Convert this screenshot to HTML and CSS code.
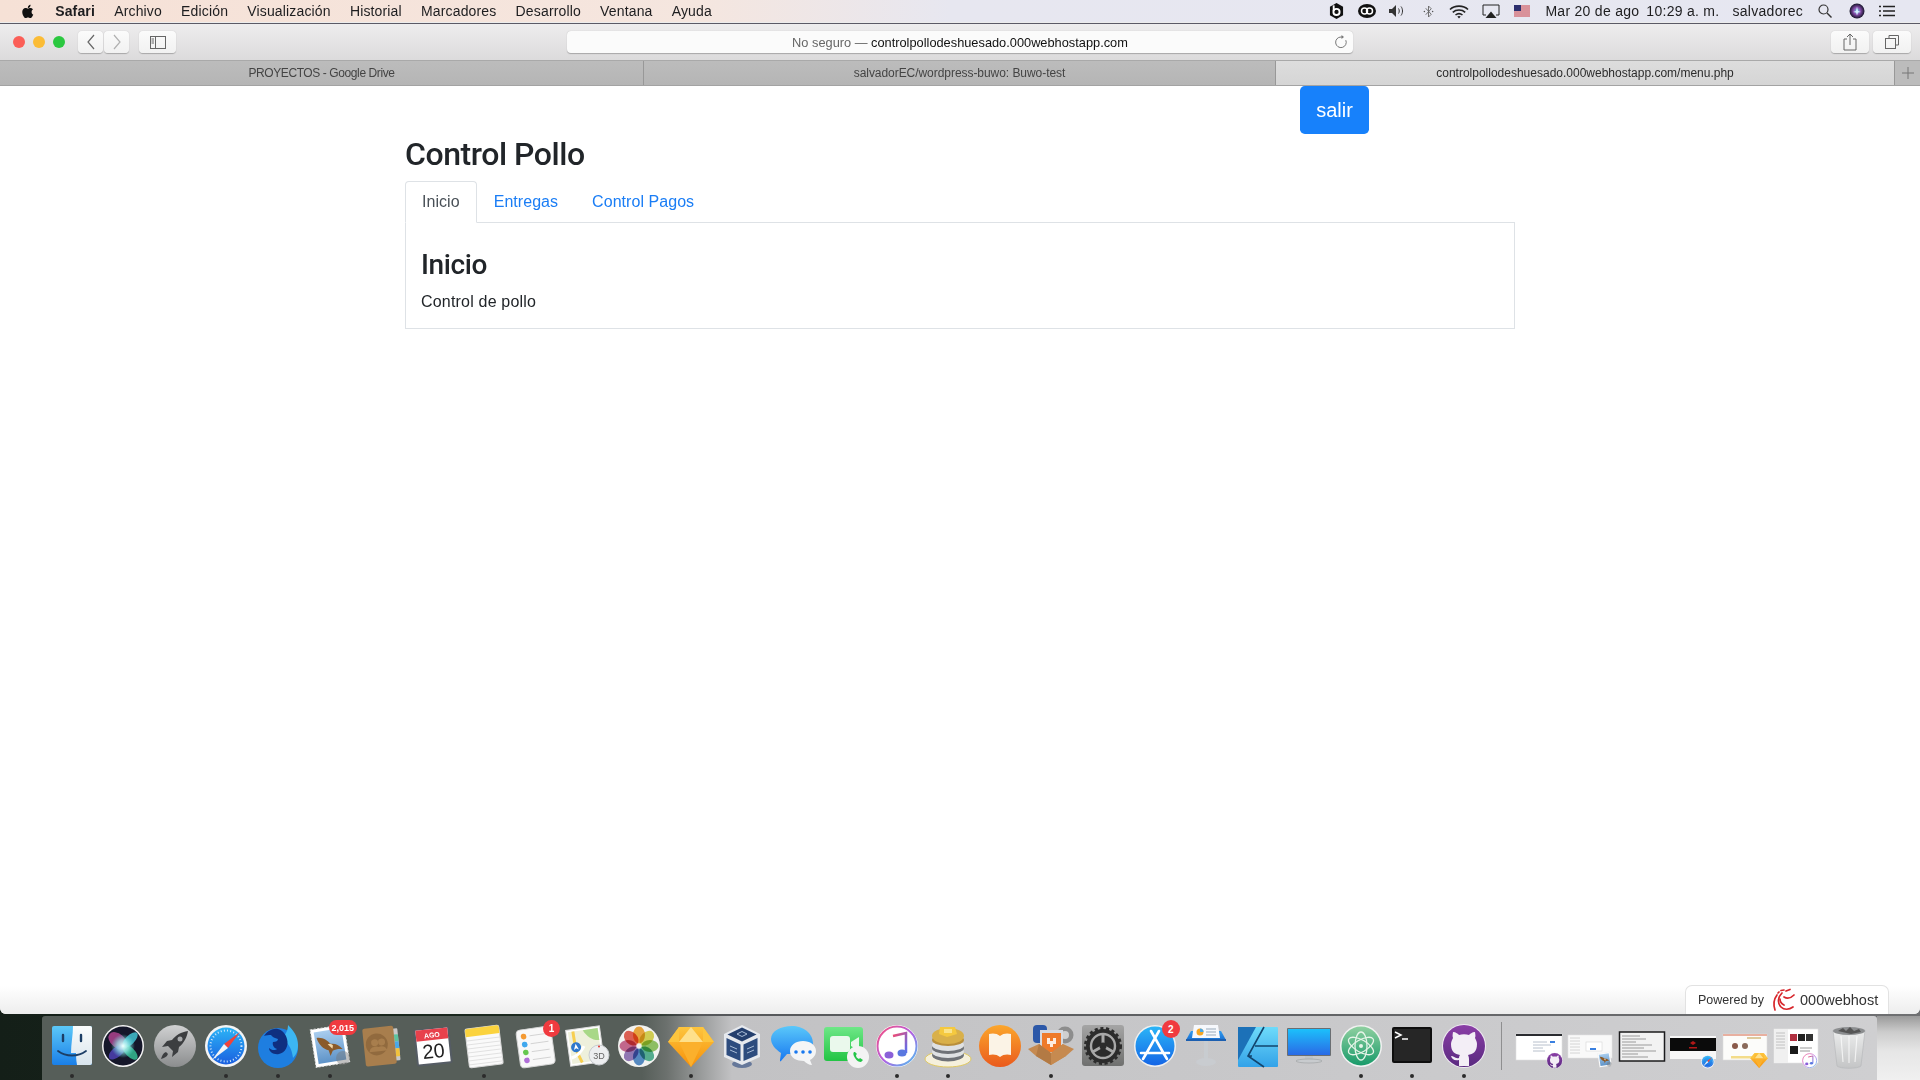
FILE: index.html
```html
<!DOCTYPE html>
<html lang="es">
<head>
<meta charset="utf-8">
<title>Control Pollo</title>
<link rel="stylesheet" href="styles.css">
</head>
<body>
<svg class="defs" aria-hidden="true">
  <defs>
    <linearGradient id="gFinder" x1="0" y1="0" x2="0" y2="1"><stop offset="0" stop-color="#5cc8f8"/><stop offset="1" stop-color="#1a7fe8"/></linearGradient>
    <linearGradient id="gFinderR" x1="0" y1="0" x2="0" y2="1"><stop offset="0" stop-color="#fafcfd"/><stop offset="1" stop-color="#d8e4ec"/></linearGradient>
    <linearGradient id="gGray" x1="0" y1="0" x2="0" y2="1"><stop offset="0" stop-color="#d0d1d2"/><stop offset="1" stop-color="#8b8d8e"/></linearGradient>
    <linearGradient id="gSafari" x1="0" y1="0" x2="0" y2="1"><stop offset="0" stop-color="#2cb4f6"/><stop offset="1" stop-color="#1a5fe0"/></linearGradient>
    <linearGradient id="gSky" x1="0" y1="0" x2="0" y2="1"><stop offset="0" stop-color="#a9cdee"/><stop offset="1" stop-color="#5e93c8"/></linearGradient>
    <linearGradient id="gSketch" x1="0" y1="0" x2="0" y2="1"><stop offset="0" stop-color="#fdc53e"/><stop offset="1" stop-color="#f79009"/></linearGradient>
    <linearGradient id="gMsg" x1="0" y1="0" x2="0" y2="1"><stop offset="0" stop-color="#5ac8fa"/><stop offset="1" stop-color="#1878f0"/></linearGradient>
    <linearGradient id="gFace" x1="0" y1="0" x2="0" y2="1"><stop offset="0" stop-color="#6ee787"/><stop offset="1" stop-color="#22c444"/></linearGradient>
    <linearGradient id="gTunes" x1="0" y1="0" x2="1" y2="1"><stop offset="0" stop-color="#f9507a"/><stop offset=".5" stop-color="#b35ee0"/><stop offset="1" stop-color="#4cc4f0"/></linearGradient>
    <linearGradient id="gNote" x1="0" y1="0" x2="1" y2="1"><stop offset="0" stop-color="#f7496e"/><stop offset="1" stop-color="#5a6ef0"/></linearGradient>
    <linearGradient id="gBooks" x1="0" y1="0" x2="0" y2="1"><stop offset="0" stop-color="#fba62c"/><stop offset="1" stop-color="#ea5a1c"/></linearGradient>
    <linearGradient id="gStore" x1="0" y1="0" x2="0" y2="1"><stop offset="0" stop-color="#2bb5f7"/><stop offset="1" stop-color="#1465e6"/></linearGradient>
    <linearGradient id="gGear" x1="0" y1="0" x2="0" y2="1"><stop offset="0" stop-color="#a5a5a5"/><stop offset="1" stop-color="#6f706f"/></linearGradient>
    <linearGradient id="gDisplay" x1="0" y1="0" x2="0" y2="1"><stop offset="0" stop-color="#1cc0fb"/><stop offset="1" stop-color="#2a6ae6"/></linearGradient>
    <linearGradient id="gAtom" x1="0" y1="0" x2="0" y2="1"><stop offset="0" stop-color="#8fd0a0"/><stop offset="1" stop-color="#189a6a"/></linearGradient>
    <linearGradient id="gGit" x1="0" y1="0" x2="0" y2="1"><stop offset="0" stop-color="#8a3ea6"/><stop offset="1" stop-color="#5a2a80"/></linearGradient>
    <linearGradient id="gAffinity" x1="0" y1="0" x2="0" y2="1"><stop offset="0" stop-color="#6edbfa"/><stop offset="1" stop-color="#33a2e8"/></linearGradient>
    <linearGradient id="gKeynote" x1="0" y1="0" x2="0" y2="1"><stop offset="0" stop-color="#2f9bf0"/><stop offset="1" stop-color="#1a70d0"/></linearGradient>
    <linearGradient id="gTrash" x1="0" y1="0" x2="0" y2="1"><stop offset="0" stop-color="#eceded"/><stop offset="1" stop-color="#c4c5c6"/></linearGradient>
    <radialGradient id="gSiri" cx=".5" cy=".5" r=".5"><stop offset="0" stop-color="#5de0e0"/><stop offset=".45" stop-color="#8a4fb0"/><stop offset="1" stop-color="#141428"/></radialGradient>
    <radialGradient id="gSiriCore" cx=".5" cy=".5" r=".5"><stop offset="0" stop-color="#f2ffff"/><stop offset=".5" stop-color="#9ff0ee" stop-opacity=".7"/><stop offset="1" stop-color="#5de0e0" stop-opacity="0"/></radialGradient>
  </defs>
</svg>

<header class="menubar">
  <nav class="menu-left">
    <svg class="apple" viewBox="0 0 14 16"><path d="M10.3 8.5c0-1.8 1.5-2.7 1.6-2.8-.9-1.300-2.200-1.500-2.700-1.500-1.100-.1-2.200.7-2.800.7-.6 0-1.500-.7-2.400-.7C2.700 4.200 1.500 4.900.9 6c-1.300 2.200-.3 5.500.9 7.300.6.900 1.300 1.900 2.300 1.800.9 0 1.300-.6 2.400-.6s1.400.6 2.400.6 1.600-.9 2.200-1.800c.7-1 1-2 1-2.100-.1 0-1.800-.7-1.800-2.700zM8.500 3.100c.5-.6.800-1.500.7-2.300-.7 0-1.600.5-2.100 1.100-.5.5-.9 1.400-.8 2.200.8.1 1.700-.4 2.200-1z"/></svg>
    <span class="menu-app">Safari</span>
    <span>Archivo</span><span>Edición</span><span>Visualización</span><span>Historial</span><span>Marcadores</span><span>Desarrollo</span><span>Ventana</span><span>Ayuda</span>
  </nav>
  <div class="menu-right">
    <svg class="st st-b" viewBox="0 0 16 18"><path d="M8 .5 15 4.500v9L8 17.500 1 13.500v-9z" fill="#111"/><circle cx="8" cy="10" r="3.300" fill="none" stroke="#fff" stroke-width="2"/><path d="M5 3v6" stroke="#fff" stroke-width="2"/></svg>
    <svg class="st st-cc" viewBox="0 0 20 16"><ellipse cx="10" cy="8" rx="9" ry="7" fill="#111"/><circle cx="7.500" cy="8" r="3" fill="none" stroke="#fff" stroke-width="1.500"/><circle cx="12.500" cy="8" r="3" fill="none" stroke="#fff" stroke-width="1.500"/></svg>
    <svg class="st st-vol" viewBox="0 0 18 14"><path d="M1 5h3l4-4v12l-4-4H1z" fill="#333"/><path d="M10.500 4.500c1 1.500 1 3.500 0 5M13 2.500c2 2.500 2 6.500 0 9" fill="none" stroke="#333" stroke-width="1"/></svg>
    <svg class="st st-bt" viewBox="0 0 12 16"><path d="M3 4.500 9 11 6 14V2l3 3-6 6.500" fill="none" stroke="#666" stroke-width="1"/><circle cx="1.500" cy="8" r=".8" fill="#555"/><circle cx="10.500" cy="8" r=".8" fill="#555"/></svg>
    <svg class="st st-wifi" viewBox="0 0 20 15"><path d="M1 5.500C5.500 1 14.500 1 19 5.500M3.800 8.300C7 5.300 13 5.300 16.200 8.300M6.500 11C8.500 9.400 11.500 9.400 13.500 11" fill="none" stroke="#222" stroke-width="1.600"/><path d="M8.300 12.500 10 14.500l1.700-2c-1-.8-2.400-.8-3.400 0z" fill="#222"/></svg>
    <svg class="st st-air" viewBox="0 0 18 15"><path d="M4 11H1V1h16v10h-3" fill="none" stroke="#222" stroke-width="1"/><path d="M9 7.500 14.500 14h-11z" fill="#222"/></svg>
    <svg class="st st-flag" viewBox="0 0 16 12"><rect width="16" height="12" fill="#fff"/><path d="M0 1h16M0 3h16M0 5h16M0 7h16M0 9h16M0 11h16" stroke="#b22234" stroke-width="1"/><rect width="7" height="6" fill="#2c2f6e"/></svg>
    <span class="clock-date">Mar 20 de ago</span>
    <span class="clock-time">10:29 a. m.</span>
    <span class="clock-user">salvadorec</span>
    <svg class="st st-search" viewBox="0 0 14 14"><circle cx="5.500" cy="5.500" r="4.500" fill="none" stroke="#333" stroke-width="1.200"/><path d="m9 9 4.500 4.500" stroke="#333" stroke-width="1.400"/></svg>
    <svg class="st st-siri" viewBox="0 0 16 16"><circle cx="8" cy="8" r="7.500" fill="url(#gSiri)"/><path d="M8 3.500 9 8l3 1-3 .500-1 3-1-3-3-.500 3-1z" fill="#d8f0ff"/></svg>
    <svg class="st st-list" viewBox="0 0 16 12"><path d="M4 1.500h12M4 6h12M4 10.500h12" stroke="#222" stroke-width="1.400"/><path d="M0 1.500h2M0 6h2M0 10.500h2" stroke="#222" stroke-width="1.400"/></svg>
  </div>
</header>

<div class="window">
  <div class="toolbar">
    <div class="lights">
      <span class="light light-red"></span><span class="light light-yellow"></span><span class="light light-green"></span>
    </div>
    <div class="btn-pair">
      <span class="tool-btn nav-btn"><svg viewBox="0 0 10 16" class="glyph-nav"><path d="M8 1 2 8l6 7" fill="none" stroke="#666" stroke-width="1.200"/></svg></span>
      <span class="tool-btn nav-btn"><svg viewBox="0 0 10 16" class="glyph-nav"><path d="m2 1 6 7-6 7" fill="none" stroke="#b0b0b0" stroke-width="1.200"/></svg></span>
    </div>
    <span class="tool-btn side-btn"><svg viewBox="0 0 16 13" class="glyph-side"><rect x=".5" y=".5" width="15" height="12" fill="none" stroke="#666"/><path d="M5.500 .5v12M1.500 3h2.500M1.500 5h2.500M1.500 7h2.500" stroke="#666" fill="none"/></svg></span>
    <div class="urlbar">
      <span class="url-text"><span class="url-muted">No seguro — </span>controlpollodeshuesado.000webhostapp.com</span>
      <svg viewBox="0 0 14 14" class="reload"><path d="M11.800 5.200A5.300 5.300 0 1 1 7 2h1.500" fill="none" stroke="#777" stroke-width="1"/><path d="M7.500 0v4L10 2z" fill="#777"/></svg>
    </div>
    <div class="toolbar-right">
      <span class="tool-btn share-btn"><svg viewBox="0 0 14 18" class="glyph-share"><path d="M4 6H1v11h12V6h-3M7 12V1M4 4l3-3 3 3" fill="none" stroke="#666"/></svg></span>
      <span class="tool-btn tabs-btn"><svg viewBox="0 0 14 14" class="glyph-tabs"><path d="M4 3V.5h9.500V10H11" fill="none" stroke="#666"/><rect x=".5" y="3.500" width="10" height="10" fill="none" stroke="#666"/></svg></span>
    </div>
  </div>
  <div class="tabstrip">
    <div class="tab tab-one">PROYECTOS - Google Drive</div>
    <div class="tab tab-two">salvadorEC/wordpress-buwo: Buwo-test</div>
    <div class="tab tab-active">controlpollodeshuesado.000webhostapp.com/menu.php</div>
    <div class="tab-plus"><svg viewBox="0 0 12 12" class="glyph-plus"><path d="M6 0v12M0 6h12" stroke="#777" stroke-width="1"/></svg></div>
  </div>

  <main class="page">
    <div class="container">
      <div class="exit-row"><a class="btn-exit" href="#">salir</a></div>
      <h2 class="title">Control Pollo</h2>
      <ul class="nav-tabs">
        <li class="nav-item nav-active">Inicio</li>
        <li class="nav-item">Entregas</li>
        <li class="nav-item">Control Pagos</li>
      </ul>
      <section class="tab-content">
        <h3 class="pane-title">Inicio</h3>
        <p class="pane-text">Control de pollo</p>
      </section>
    </div>
    <div class="win-shadow"></div>
    <div class="powered">
      <span class="powered-by">Powered by</span>
      <svg viewBox="0 0 24 24" class="logo000"><g fill="none" stroke="#d7262b" stroke-width="1.700" stroke-linecap="round"><path d="M6 7C3 11 2 16 4 22"/><path d="M11 5C7 9 6 15 10 19c3 3 8 3 12 0"/><path d="M23 7c-3 3-7 4-10 2"/><path d="M10 2.500 13 2M15 3l4-1.500M7 5l1-1"/><path d="M9 11c0 3 2 5 4 6"/></g></svg>
      <span class="powered-name">000webhost</span>
    </div>
  </main>
</div>

<footer class="dock-zone">
  <div class="dock">
    <div class="dock-item running"><svg class="icon" viewBox="0 0 48 48"><rect x="4" y="4" width="40" height="39" rx="2" fill="url(#gFinder)"/><path d="M25 4h17a2 2 0 0 1 2 2v35a2 2 0 0 1-2 2H29c-1-6-1-10-1-12h-5c0-9 2-18 2-27z" fill="url(#gFinderR)"/><path d="M15 13v6M33 13v6" stroke="#1c3e66" stroke-width="2.400" stroke-linecap="round"/><path d="M10 29c8 6 20 6 28 0" fill="none" stroke="#1c3e66" stroke-width="1.800" stroke-linecap="round"/></svg></div>

    <div class="dock-item"><svg class="icon" viewBox="0 0 48 48"><circle cx="24" cy="24" r="21" fill="#f4f4f4"/><circle cx="24" cy="24" r="19.500" fill="#15172a"/><ellipse cx="19" cy="19" rx="11" ry="7" fill="#c24a9c" opacity=".75" transform="rotate(40 19 19)"/><ellipse cx="18" cy="30" rx="10" ry="5" fill="#5a4ad0" opacity=".7" transform="rotate(-40 18 30)"/><ellipse cx="31" cy="18" rx="10" ry="4.500" fill="#48d8e8" opacity=".75" transform="rotate(-45 31 18)"/><ellipse cx="31" cy="30" rx="10" ry="4.500" fill="#3ce0a8" opacity=".7" transform="rotate(45 31 30)"/><circle cx="24" cy="24" r="12" fill="url(#gSiriCore)"/></svg></div>

    <div class="dock-item"><svg class="icon" viewBox="0 0 48 48"><circle cx="24" cy="24" r="21" fill="url(#gGray)"/><path d="M37 9c-7 1-12 4-16 9l-5 1-5 6 6-1 5 5-1 6 6-5 1-5c5-4 8-10 9-16z" fill="#3c3e40"/><circle cx="29" cy="17" r="2.500" fill="#a8aaac"/><path d="M15 30c-3 1-4 4-5 7 3-1 6-2 7-5z" fill="#3c3e40"/></svg></div>

    <div class="dock-item running"><svg class="icon" viewBox="0 0 48 48"><g id="safari-g"><circle cx="24" cy="24" r="21" fill="#f4f4f4"/><circle cx="24" cy="24" r="18.500" fill="url(#gSafari)"/><circle cx="24" cy="24" r="15.500" fill="none" stroke="#cfe6fb" stroke-width="2" stroke-dasharray="1 2.200"/><path d="m38 10-12 16-4-4z" fill="#f0433a"/><path d="m10 38 12-16 4 4z" fill="#f4f4f4"/></g></svg></div>

    <div class="dock-item running"><svg class="icon" viewBox="0 0 48 48"><circle cx="24" cy="26" r="20" fill="#1e7ee0"/><path d="M34 3c5 5 10 11 10 20 0 6-2 10-5 13-1-10-6-17-12-20 5-3 7-8 7-13z" fill="#3cb6f2"/><path d="M10 14c3-5 9-8 14-7 4 1 8 5 9 10 2 7-2 14-8 15-5 1-10-2-10-6 2 2 6 3 8 1-3-1-5-4-4-7 3 0 5-1 5-3-3-1-6-2-7-4-2 0-5 0-7 1z" fill="#0f2f80"/></svg></div>

    <div class="dock-item running"><svg class="icon" viewBox="0 0 48 48"><g id="mail-g"><g transform="rotate(-9 24 24)"><rect x="7" y="5" width="34" height="38" fill="#fff" stroke="#ddd" stroke-dasharray="2 1.500"/><rect x="10" y="8" width="28" height="32" fill="url(#gSky)"/><path d="M12 14c6 0 10 4 13 8 4 0 8 2 11 7-4-1-7-1-10 0l-3 5-1-6c-5-2-9-7-10-14z" fill="#8a5a2a"/><path d="M22 22c2-1 4 0 5 2l-1 3z" fill="#f2d7a8"/></g><circle cx="37" cy="36" r="7" fill="#777" opacity=".45"/></g></svg><span class="badge badge-wide">2,015</span></div>

    <div class="dock-item"><svg class="icon" viewBox="0 0 48 48"><g transform="rotate(-6 24 24)"><rect x="36" y="8" width="6" height="32" rx="1" fill="#c9c9c9"/><rect x="38" y="14" width="4" height="7" fill="#5cc4a0"/><rect x="38" y="21" width="4" height="7" fill="#4aa8e8"/><rect x="38" y="28" width="4" height="8" fill="#f2c23c"/><rect x="7" y="5" width="31" height="38" rx="2" fill="#a87e4d"/><circle cx="20" cy="22" r="11" fill="#916a3e"/><circle cx="18" cy="20" r="3.500" fill="#a87e4d"/><circle cx="25" cy="20" r="3.500" fill="#a87e4d"/><path d="M12 29c1-4 3-5 6-5s5 1 6 5zM22 29c0-2 0-3-1-4 4-2 8 0 9 4z" fill="#a87e4d"/></g></svg></div>

    <div class="dock-item"><svg class="icon" viewBox="0 0 48 48"><g transform="rotate(-6 24 24)"><rect x="6" y="6" width="36" height="37" rx="2" fill="#555c64"/><rect x="8" y="7" width="32" height="34" fill="#fff"/><rect x="8" y="7" width="32" height="11" fill="#e8414c"/><text x="24" y="15.500" class="cal-mon">AGO</text><text x="24" y="36" class="cal-day">20</text></g></svg></div>

    <div class="dock-item running"><svg class="icon" viewBox="0 0 48 48"><g transform="rotate(-7 24 24)"><rect x="7" y="5" width="34" height="39" rx="2" fill="#fafafa" stroke="#d8d8d8"/><path d="M7 7a2 2 0 0 1 2-2h30a2 2 0 0 1 2 2v6H7z" fill="#fbd33e"/><path d="M7 17h34M7 21h34M7 25h34M7 29h34M7 33h34M7 37h34M7 41h34" stroke="#ddd" stroke-width=".8"/></g></svg></div>

    <div class="dock-item"><svg class="icon" viewBox="0 0 48 48"><g transform="rotate(-8 24 24)"><rect x="6" y="6" width="35" height="38" rx="4" fill="#f8f8f8" stroke="#d4d4d4"/><circle cx="13" cy="13" r="2.800" fill="#f49a32"/><circle cx="13" cy="21" r="2.800" fill="#3fa8ee"/><circle cx="13" cy="29" r="2.800" fill="#66c850"/><circle cx="13" cy="37" r="2.800" fill="#b06ed8"/><path d="M19 13h18M19 21h18M19 29h18M19 37h18" stroke="#ccc" stroke-width=".8"/></g></svg><span class="badge badge-one">1</span></div>

    <div class="dock-item"><svg class="icon" viewBox="0 0 48 48"><g transform="rotate(-8 22 24)"><rect x="5" y="6" width="34" height="36" fill="#fff" stroke="#ddd"/><rect x="7" y="8" width="30" height="32" fill="#eef0dc"/><path d="M22 8h15v12c-6 0-12-5-15-12z" fill="#a8d888"/><path d="M12 8c0 10 0 20 5 32" fill="none" stroke="#f7cf50" stroke-width="3"/><path d="M7 34c6-1 10-4 14-10" fill="none" stroke="#fff" stroke-width="3"/><circle cx="13" cy="24" r="5" fill="#2d77cc"/><path d="m13 20.500 2.500 6-2.500-1.500-2.500 1.500z" fill="#fff"/></g><circle cx="36" cy="33" r="10" fill="#eceef0" stroke="#c8ccd0"/><text x="36" y="36.500" class="map-3d">3D</text><circle cx="36" cy="24.500" r="1" fill="#e0352c"/></svg></div>

    <div class="dock-item"><svg class="icon" viewBox="0 0 48 48"><circle cx="24" cy="24" r="21" fill="#f2f2f0"/><g class="petals"><ellipse cx="24" cy="13" rx="6" ry="8.500" fill="#f2a531"/><ellipse cx="24" cy="13" rx="6" ry="8.500" fill="#d8d449" transform="rotate(45 24 24)"/><ellipse cx="24" cy="13" rx="6" ry="8.500" fill="#8cc45c" transform="rotate(90 24 24)"/><ellipse cx="24" cy="13" rx="6" ry="8.500" fill="#4aae8e" transform="rotate(135 24 24)"/><ellipse cx="24" cy="13" rx="6" ry="8.500" fill="#4b86c8" transform="rotate(180 24 24)"/><ellipse cx="24" cy="13" rx="6" ry="8.500" fill="#8f72b8" transform="rotate(225 24 24)"/><ellipse cx="24" cy="13" rx="6" ry="8.500" fill="#c85f8c" transform="rotate(270 24 24)"/><ellipse cx="24" cy="13" rx="6" ry="8.500" fill="#e55748" transform="rotate(315 24 24)"/></g></svg></div>

    <div class="dock-item running"><svg class="icon" viewBox="0 0 48 48"><g id="sketch-g"><path d="M12 5h24l11 15-23 25L1 20z" fill="url(#gSketch)"/><path d="M24 5 12 20h24z" fill="#fee08b"/><path d="M12 20 24 45 36 20z" fill="#fbb02c"/><path d="M12 5 1 20h11zM36 5l11 15H36z" fill="#fdc53e"/></g></svg></div>

    <div class="dock-item"><svg class="icon" viewBox="0 0 48 48"><ellipse cx="24" cy="42" rx="10" ry="4" fill="#66789a"/><path d="M24 3 42 12v23l-18 8-18-8V12z" fill="#e6e9ee"/><path d="M24 5.500 38.500 12.500 24 19.500 9.500 12.500z" fill="#243f6e"/><path d="M8.500 16l14 6.500v16.500l-14-6zM39.500 16l-14 6.500v16.500l14-6z" fill="#2d4c7e"/><path d="M12 24l7 3M12 28l7 3M29 27l7-3M29 31l7-3M19 12l5-2.500 5 2.500-5 2.500z" stroke="#a9bcd6" stroke-width="1" fill="none"/></svg></div>

    <div class="dock-item"><svg class="icon" viewBox="0 0 48 48"><path d="M22 4c11 0 21 7 21 17 0 5-3 9-6 11H17l-6 7c-1 1-1 0-1-1l1-7C5 27 1 22 1 17 1 9 11 4 22 4z" fill="url(#gMsg)"/><path d="M33 19c7 0 13 4 13 10 0 5-4 8-6 9l2 5c-3 0-6-2-8-4-7 0-14-3-14-10 0-6 6-10 13-10z" fill="#f4f5f6"/><circle cx="26" cy="30" r="1.800" fill="#1878f0"/><circle cx="33" cy="30" r="1.800" fill="#1878f0"/><circle cx="40" cy="30" r="1.800" fill="#1878f0"/></svg></div>

    <div class="dock-item"><svg class="icon" viewBox="0 0 48 48"><rect x="3" y="5" width="39" height="34" rx="3" fill="url(#gFace)"/><rect x="9" y="14" width="20" height="16" rx="3" fill="#eaf8ec"/><path d="m30 20 8-5v14l-8-5z" fill="#eaf8ec"/><circle cx="37" cy="35" r="11" fill="#f3f3f3"/><path d="M33 30c-1 1-1 3 1 6s4 4 6 4l2-2-3-2-1 1c-2-1-3-2-3-4l1-1-2-2z" fill="#24c548"/></svg></div>

    <div class="dock-item running"><svg class="icon" viewBox="0 0 48 48"><g id="tunes-g"><circle cx="24" cy="24" r="21" fill="#fff"/><circle cx="24" cy="24" r="19.500" fill="none" stroke="url(#gTunes)" stroke-width="2"/><path d="M20 14 33 11v20" fill="none" stroke="url(#gNote)" stroke-width="2.500"/><path d="M20 14v19" stroke="url(#gNote)" stroke-width="2.500"/><ellipse cx="16" cy="33" rx="4.500" ry="3.500" fill="#8a60d8"/><ellipse cx="29" cy="31" rx="4.500" ry="3.500" fill="#5a78e0"/></g></svg></div>

    <div class="dock-item running"><svg class="icon" viewBox="0 0 48 48"><ellipse cx="24" cy="37" rx="23" ry="8" fill="#f5f0dc" stroke="#e0c860"/><ellipse cx="24" cy="33" rx="16" ry="6.500" fill="#6f7277"/><ellipse cx="24" cy="30" rx="16" ry="6" fill="#dfe1e3"/><ellipse cx="24" cy="26" rx="16" ry="6" fill="#6f7277"/><ellipse cx="24" cy="23" rx="16" ry="6" fill="#dfe1e3"/><ellipse cx="24" cy="18" rx="16" ry="6" fill="#b98f3c"/><ellipse cx="24" cy="14" rx="16" ry="8" fill="#d9b04a"/><path d="M16 5h15l2 7-10 3-8-3z" fill="#f5c93f"/><rect x="20" y="7" width="8" height="4" fill="#fbe38a"/></svg></div>

    <div class="dock-item"><svg class="icon" viewBox="0 0 48 48"><circle cx="24" cy="24" r="21" fill="url(#gBooks)"/><path d="M24 14c-3-3-8-3-11-2v21c3-1 8-1 11 2zM24 14c3-3 8-3 11-2v21c-3-1-8-1-11 2z" fill="#fbf3e6"/></svg></div>

    <div class="dock-item running"><svg class="icon" viewBox="0 0 48 48"><circle cx="38" cy="13" r="8.500" fill="#8d8d8d"/><circle cx="38" cy="13" r="4" fill="#cfcfcf"/><rect x="6" y="3" width="14" height="18" rx="4" fill="#2c58a8"/><rect x="13" y="8" width="23" height="24" fill="#d5d9e0"/><rect x="15" y="11" width="19" height="19" fill="#ee7a2a"/><path d="M20 16h3v3h3v-3h3v6h-3v3h-3v-3h-3z" fill="#fff" opacity=".85"/><path d="M1 27 12 22l12 9 12-9 11 5-8 7v0l-15 9-15-9z" fill="#c68a50"/><path d="M24 31v12l-15-9 3-12z" fill="#b37a44"/><path d="M24 31v12l15-9-3-12z" fill="#c68a50"/></svg></div>

    <div class="dock-item"><svg class="icon" viewBox="0 0 48 48"><rect x="3" y="3" width="42" height="41" rx="3" fill="url(#gGear)"/><circle cx="24" cy="24" r="17" fill="#2c2c2c"/><circle cx="24" cy="24" r="17" fill="none" stroke="#2c2c2c" stroke-width="4" stroke-dasharray="3 2.500"/><circle cx="24" cy="24" r="12" fill="none" stroke="#a8a8a8" stroke-width="2.400"/><path d="M24 24V12M24 24 13.600 30M24 24l10.400 6" stroke="#a8a8a8" stroke-width="3"/><circle cx="24" cy="24" r="3.500" fill="#2c2c2c"/></svg></div>

    <div class="dock-item"><svg class="icon" viewBox="0 0 48 48"><circle cx="24" cy="24" r="21" fill="#f0f0f0"/><circle cx="24" cy="24" r="19.500" fill="url(#gStore)"/><path d="M28 9 15 32M20 9l13 23M10 31h28M12 37l3-5M36 37l-3-5" stroke="#fff" stroke-width="2.600" stroke-linecap="round"/></svg><span class="badge badge-two">2</span></div>

    <div class="dock-item"><svg class="icon" viewBox="0 0 48 48"><path d="M9 9h30l5 9H4z" fill="url(#gKeynote)"/><rect x="4" y="17" width="40" height="2" fill="#1c5fb0"/><path d="M12 3h24l2 13H10z" fill="#f6f8fc"/><circle cx="18" cy="10" r="3.500" fill="#f5a623"/><path d="M18 10V6.500A3.500 3.500 0 0 1 21.500 10z" fill="#4aa8e8"/><path d="M24 7h10M24 10h10M24 13h10" stroke="#9ab" stroke-width="1"/><rect x="22" y="19" width="4" height="19" fill="#c8ccd0"/><ellipse cx="24" cy="40" rx="10" ry="4" fill="#c9ccd0"/></svg></div>

    <div class="dock-item"><svg class="icon" viewBox="0 0 48 48"><rect x="4" y="5" width="40" height="40" rx="1" fill="url(#gAffinity)"/><path d="M4 5h18L4 38z" fill="#1c71b8"/><path d="M30 5 14 34l16 11M21 24h23M14 34l4 0" fill="none" stroke="#12456e" stroke-width="1.600"/></svg></div>

    <div class="dock-item"><svg class="icon" viewBox="0 0 48 48"><rect x="2" y="6" width="44" height="28" rx="1" fill="#6a6e72"/><rect x="3" y="7" width="42" height="26" fill="url(#gDisplay)"/><rect x="20" y="34" width="8" height="4" fill="#c0c3c6"/><ellipse cx="24" cy="39" rx="13" ry="2" fill="#c8cbce" stroke="#9a9da0" stroke-width=".6"/></svg></div>

    <div class="dock-item running"><svg class="icon" viewBox="0 0 48 48"><circle cx="24" cy="24" r="21" fill="#f2f2f2"/><circle cx="24" cy="24" r="19.500" fill="url(#gAtom)"/><g fill="none" stroke="#e6f4e8" stroke-width="1.300"><ellipse cx="24" cy="24" rx="14" ry="6" transform="rotate(30 24 24)"/><ellipse cx="24" cy="24" rx="14" ry="6" transform="rotate(90 24 24)"/><ellipse cx="24" cy="24" rx="14" ry="6" transform="rotate(150 24 24)"/></g><circle cx="24" cy="24" r="2" fill="#e6f4e8"/></svg></div>

    <div class="dock-item running"><svg class="icon" viewBox="0 0 48 48"><rect x="4" y="5" width="40" height="36" rx="2" fill="#0e0e0e"/><rect x="6" y="7" width="36" height="32" fill="#262626"/><path d="m7 10 6 3-6 3" fill="none" stroke="#fff" stroke-width="1.500"/><path d="M14 17h6" stroke="#fff" stroke-width="1.500"/></svg></div>

    <div class="dock-item running"><svg class="icon" viewBox="0 0 48 48"><g id="git-g"><circle cx="24" cy="24" r="22" fill="#efe9f2"/><circle cx="24" cy="24" r="21" fill="url(#gGit)"/><path d="M19 44v-6c-5 1-7-1-8-4 3 0 4 3 8 2 0-2 1-3 1-3-5-1-9-3-9-11 0-2 1-4 2-6-1-2 0-5 0-6 3 0 5 2 6 3 3-1 7-1 10 0 1-1 3-3 6-3 0 1 1 4 0 6 1 2 2 4 2 6 0 8-4 10-9 11 0 0 1 2 1 4v7z" fill="#f3eef6"/></g></svg></div>

    <span class="dock-sep"></span>

    <div class="dock-item thumb"><svg class="icon" viewBox="0 0 48 48"><rect x="1" y="12" width="46" height="26" fill="#fff" stroke="#e0e0e0" stroke-width=".6"/><rect x="1" y="12" width="46" height="2" fill="#2a2c30"/><path d="M18 20h14M18 23h18M18 26h10M18 29h12" stroke="#b8c0cc" stroke-width="1"/><rect x="35" y="19" width="5" height="2" fill="#3a80e0"/><use href="#git-g" transform="translate(31 30) scale(.36)"/></svg></div>
    <div class="dock-item thumb"><svg class="icon" viewBox="0 0 48 48"><rect x="2" y="13" width="44" height="23" fill="#f9f9f9" stroke="#e4e4e4" stroke-width=".6"/><path d="M4 16h10M4 19h10M4 22h10M4 25h10M4 28h10M4 31h10" stroke="#ccc" stroke-width=".8"/><rect x="20" y="20" width="16" height="9" fill="#fff" stroke="#d0d0d0" stroke-width=".5"/><rect x="24" y="26" width="6" height="2" fill="#3a80e0"/><use href="#mail-g" transform="translate(30 29) scale(.36)"/></svg></div>
    <div class="dock-item thumb"><svg class="icon" viewBox="0 0 48 48"><rect x="1.500" y="10" width="45" height="29" fill="#f2f2f2" stroke="#1b1b1d" stroke-width="1.500"/><path d="M4 14h18M4 17h24M4 20h14M4 23h30M4 26h22M4 29h34M4 32h16M4 35h26" stroke="#9a9a9a" stroke-width="1"/></svg></div>
    <div class="dock-item thumb"><svg class="icon" viewBox="0 0 48 48"><rect x="1" y="14" width="46" height="23" fill="#f7f7f7"/><rect x="1" y="16" width="46" height="13" fill="#0b0b0b"/><path d="m24 19 3 2-3 2-3-2z" fill="#b01818"/><rect x="20" y="25" width="8" height="1.500" fill="#b01818"/><use href="#safari-g" transform="translate(31 32) scale(.32)"/></svg></div>
    <div class="dock-item thumb"><svg class="icon" viewBox="0 0 48 48"><rect x="2" y="12" width="44" height="26" fill="#fcfcfa" stroke="#ddd" stroke-width=".6"/><rect x="2" y="12" width="44" height="2" fill="#e8b0a0"/><path d="M26 16h14" stroke="#caa860" stroke-width="1.200"/><circle cx="14" cy="24" r="3" fill="#8a5a4a"/><circle cx="24" cy="24" r="3" fill="#8a6a5a"/><rect x="10" y="34" width="26" height="2.500" fill="#f3dc8a"/><use href="#sketch-g" transform="translate(29 29) scale(.38)"/></svg></div>
    <div class="dock-item thumb"><svg class="icon" viewBox="0 0 48 48"><rect x="2" y="7" width="44" height="34" fill="#fff" stroke="#e4e4e4" stroke-width=".6"/><rect x="2" y="7" width="14" height="34" fill="#f0f0f0"/><path d="M4 11h9M4 14h9M4 17h9M4 20h9M4 23h9M4 26h9" stroke="#bbb" stroke-width=".9"/><rect x="18" y="12" width="7" height="7" fill="#b03040"/><rect x="26" y="12" width="7" height="7" fill="#222"/><rect x="34" y="12" width="7" height="7" fill="#333"/><rect x="18" y="24" width="8" height="8" fill="#1a1a1a"/><path d="M28 26h12M28 29h10" stroke="#999" stroke-width="1"/><use href="#tunes-g" transform="translate(29 30) scale(.36)"/></svg></div>
    <div class="dock-item"><svg class="icon" viewBox="0 0 48 48"><path d="M9 8h32l-4 36c-3 3-21 3-24 0z" fill="url(#gTrash)" stroke="#b4b6b8" stroke-width=".6"/><ellipse cx="25" cy="9" rx="16" ry="4" fill="#8c8e90"/><path d="M14 9l5-3 3 3 4-4 4 4 5-2 2 3-10 2z" fill="#555"/><path d="M17 14l2 26M25 14v27M33 14l-2 26" stroke="#fff" stroke-width="1.200" opacity=".7"/></svg></div>
  </div>
</footer>
</body>
</html>
```

FILE: styles.css
```css
* { box-sizing: border-box; }

html, body { height: 100%; }

body {
  margin: 0;
  height: 1080px;
  overflow: hidden;
  display: flex;
  flex-direction: column;
  font-family: "Liberation Sans", Arial, sans-serif;
  color: #212529;
  background: linear-gradient(90deg, #141f18 0, #1d2b20 640px, #55575a 700px, #6f7072 100%);
}

.defs { width: 0; height: 0; position: absolute; }

/* menu bar */
.menubar {
  height: 24px;
  flex: none;
  display: flex;
  justify-content: space-between;
  align-items: center;
  padding: 0 25px 2px 22px;
  font-size: 14px;
  letter-spacing: .15px;
  color: #1d1d1f;
  background: linear-gradient(90deg, #f6e1d6 0, #f5e6df 700px, #e7e7f0 950px, #e6e7f1 100%);
  box-shadow: inset 0 -1px 0 #5b5a66, inset 0 -2px 0 #ececec;
}
.menu-left { display: flex; align-items: center; gap: 19.200px; }
.apple { width: 13px; height: 15px; margin-right: 1px; fill: #111; }
.menu-app { font-weight: 700; }
.menu-right { display: flex; align-items: center; letter-spacing: .28px; }
.st { display: block; flex: none; }
.st-b { width: 15px; height: 18px; }
.st-cc { width: 20px; height: 16px; margin-left: 13px; }
.st-vol { width: 18px; height: 14px; margin-left: 11px; }
.st-bt { width: 11px; height: 15px; margin-left: 17px; }
.st-wifi { width: 20px; height: 15px; margin-left: 15px; }
.st-air { width: 18px; height: 15px; margin-left: 13px; }
.st-flag { width: 16px; height: 12px; margin-left: 14px; }
.clock-date { margin-left: 15px; }
.clock-time { margin-left: 7px; }
.clock-user { margin-left: 13px; }
.st-search { width: 14px; height: 14px; margin-left: 15px; }
.st-siri { width: 16px; height: 16px; margin-left: 17px; }
.st-list { width: 16px; height: 12px; margin-left: 14px; }

/* browser window */
.window {
  flex: 1;
  min-height: 0;
  display: flex;
  flex-direction: column;
  margin-bottom: 2px;
  border-radius: 0 0 6px 6px;
  overflow: hidden;
}
.toolbar {
  height: 37px;
  flex: none;
  display: flex;
  align-items: center;
  padding: 0 9px 0 13px;
  background: linear-gradient(180deg, #eeedee, #dcdbdc);
  border-bottom: 1px solid #a9a9a9;
}
.lights { display: flex; gap: 8px; margin-right: 13px; }
.light { width: 12px; height: 12px; border-radius: 50%; display: block; }
.light-red { background: #fb5e57; }
.light-yellow { background: #fbbc36; }
.light-green { background: #2bc840; }
.btn-pair { display: flex; gap: 1px; margin-right: 10px; }
.tool-btn {
  height: 22px;
  display: flex;
  align-items: center;
  justify-content: center;
  background: linear-gradient(180deg, #fbfbfb, #f1f1f1);
  border-radius: 4px;
  box-shadow: 0 .5px 1px rgba(0, 0, 0, .25);
}
.nav-btn { width: 25px; }
.side-btn { width: 37px; }
.glyph-nav { width: 10px; height: 16px; }
.glyph-side { width: 16px; height: 13px; }
.urlbar {
  width: 786px;
  height: 22px;
  margin-left: 391px;
  position: relative;
  display: flex;
  align-items: center;
  justify-content: center;
  background: #fbfbfb;
  border-radius: 4px;
  box-shadow: 0 .5px 1px rgba(0, 0, 0, .25);
  font-size: 12.800px;
  color: #111;
}
.url-muted { color: #666; }
.reload { position: absolute; right: 5px; top: 4px; width: 14px; height: 14px; }
.toolbar-right { margin-left: auto; display: flex; gap: 4px; }
.share-btn { width: 38px; }
.tabs-btn { width: 38px; }
.glyph-share { width: 14px; height: 18px; }
.glyph-tabs { width: 14px; height: 14px; }

.tabstrip {
  height: 25px;
  flex: none;
  display: flex;
  font-size: 12px;
  color: #444;
  background: #bbb;
  border-bottom: 1px solid #a3a3a3;
}
.tab {
  display: flex;
  align-items: center;
  justify-content: center;
  border-right: 1px solid #989898;
}
.tab-one { width: 644px; background: linear-gradient(180deg, #bcbcbc, #b5b5b5); letter-spacing: -.4px; }
.tab-two { width: 632px; background: linear-gradient(180deg, #bcbcbc, #b5b5b5); letter-spacing: -.05px; }
.tab-active { width: 619px; background: linear-gradient(180deg, #dddddd, #d5d5d5); color: #2c2c2c; }
.tab-plus { flex: 1; display: flex; align-items: center; justify-content: center; background: #bcbcbc; }
.glyph-plus { width: 12px; height: 12px; }

/* page */
.page {
  flex: 1;
  min-height: 0;
  position: relative;
  background: #fff;
  font-size: 16px;
  line-height: 24px;
}
.container { width: 1140px; margin: 0 auto; padding: 0 15px; }
.exit-row { display: flex; justify-content: flex-end; padding-right: 146px; }
.btn-exit {
  display: block;
  width: 69px;
  height: 48px;
  padding: 9px 0 0;
  text-align: center;
  font-size: 20px;
  line-height: 30px;
  color: #fff;
  text-decoration: none;
  background: #1781fb;
  border-radius: 4.800px;
}
.title {
  margin: 1px 0 8px;
  font-family: Roboto, "Liberation Sans", sans-serif;
  font-size: 32px;
  font-weight: 500;
  line-height: 38.400px;
  letter-spacing: -.45px;
}
.nav-tabs {
  display: flex;
  margin: 0;
  padding: 0;
  list-style: none;
  border-bottom: 1px solid #dee2e6;
  letter-spacing: .05px;
}
.nav-item {
  padding: 8px 16px;
  margin-bottom: -1px;
  height: 42px;
  color: #1a7df5;
  border: 1px solid transparent;
}
.nav-active {
  color: #495057;
  background: #fff;
  border-color: #dee2e6 #dee2e6 #fff;
  border-radius: 4px 4px 0 0;
}
.tab-content {
  height: 106px;
  padding: 25px 15px 0;
  border: 1px solid #dee2e6;
  border-top: 0;
}
.pane-title {
  margin: 0 0 8px;
  font-family: Roboto, "Liberation Sans", sans-serif;
  font-size: 28px;
  font-weight: 500;
  line-height: 33.600px;
  letter-spacing: -.4px;
}
.pane-text { margin: 0; letter-spacing: .19px; }

.win-shadow {
  position: absolute;
  left: 0;
  right: 0;
  bottom: 0;
  height: 28px;
  background: linear-gradient(180deg, rgba(238, 238, 238, 0), #ededed);
  pointer-events: none;
}
.powered {
  position: absolute;
  right: 31px;
  bottom: 0;
  width: 204px;
  height: 29px;
  display: flex;
  align-items: center;
  padding-left: 12px;
  background: #fff;
  border: 1px solid #e2e2e2;
  border-bottom: 0;
  border-radius: 7px 7px 0 0;
  color: #333;
}
.powered-by { font-size: 12.500px; line-height: 16px; margin-right: 7px; }
.logo000 { width: 24px; height: 24px; margin-right: 5px; }
.powered-name { font-size: 14.500px; }

/* dock */
.dock-zone {
  height: 64px;
  flex: none;
  padding: 0 43px 0 42px;
  background: linear-gradient(180deg, #9a9a9a, #cccccc 25%, #e6e6e6 55%, #f0f0f0) right top / 43px 100% no-repeat;
}
.dock {
  height: 64px;
  display: flex;
  align-items: flex-start;
  padding: 6px 0 0 4px;
  border-radius: 3px 3px 0 0;
  background: linear-gradient(90deg, #565e59 0, #565e59 600px, #6c716e 625px, #c2c2c4 690px, #cfcfd1 100%);
}
.dock-item {
  width: 51.570px;
  height: 58px;
  flex: none;
  position: relative;
  display: flex;
  justify-content: center;
}
.icon { width: 48px; height: 48px; display: block; overflow: visible; }
.running::after {
  content: "";
  position: absolute;
  left: 50%;
  top: 52px;
  width: 4px;
  height: 4px;
  margin-left: -2px;
  border-radius: 50%;
  background: #2b2b2b;
}
.dock-sep {
  width: 1px;
  height: 48px;
  margin: 0 11px;
  flex: none;
  background: #8f8f90;
}
.badge {
  position: absolute;
  top: -2px;
  height: 16px;
  display: flex;
  align-items: center;
  justify-content: center;
  border-radius: 8px;
  background: #f03a3f;
  color: #fff;
  font-size: 10px;
  font-weight: 700;
}
.badge-wide { left: 25px; width: 28px; font-size: 9px; height: 15px; }
.badge-one { left: 33px; width: 17px; height: 17px; border-radius: 50%; }
.badge-two { left: 33px; width: 18px; height: 18px; border-radius: 50%; }

/* svg text */
.cal-mon { font: 700 7px "Liberation Sans", sans-serif; fill: #fff; text-anchor: middle; }
.cal-day { font: 400 20px "Liberation Sans", sans-serif; fill: #222; text-anchor: middle; }
.map-3d { font: 400 9px "Liberation Sans", sans-serif; fill: #666; text-anchor: middle; }
.petals ellipse { mix-blend-mode: multiply; opacity: .92; }
```
